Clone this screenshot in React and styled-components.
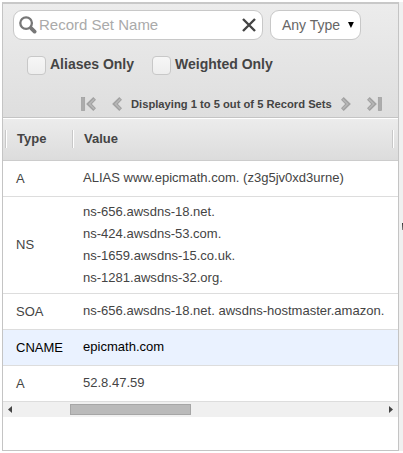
import React from "react";
import styled, { createGlobalStyle } from "styled-components";

const GlobalStyle = createGlobalStyle`
  * { box-sizing: border-box; }
  body {
    margin: 0;
    background: #fff;
    color: #444;
    font-family: "Liberation Sans", Arial, sans-serif;
    font-size: 13px;
    overflow: hidden;
  }
`;

const Page = styled.div`
  display: flex;
  width: 403px;
  height: 453px;
  padding: 2px 0 2px 2px;
`;

const Panel = styled.main`
  display: flex;
  flex-direction: column;
  width: 397px;
  height: 449px;
  border: 1px solid #c4c4c4;
  border-top: 2px solid #c8c8c8;
  background: #fff;
`;

const Gutter = styled.div`
  display: flex;
  justify-content: flex-end;
  width: 4px;
  padding-top: 221px;
  background: #f0f0f0;
`;

const Grip = styled.span`
  width: 1px;
  height: 7px;
  background: linear-gradient(#333, #888);
`;

const Toolbar = styled.header`
  height: 114px;
  border-bottom: 1px solid #c4c4c4;
  background: linear-gradient(#ececec, #dedede);
`;

const SearchRow = styled.div`
  display: flex;
  gap: 7px;
  padding: 6px 0 0 10px;
`;

const Field = styled.div`
  display: flex;
  align-items: center;
  width: ${(p) => p.$width}px;
  height: 30px;
  padding: 0 6px 0 ${(p) => p.$inset}px;
  border: 1px solid #c8c8c8;
  border-radius: 9px;
  background: #fff;
  color: ${(p) => p.$color};
  font-size: ${(p) => p.$size}px;
  white-space: nowrap;
`;

const Placeholder = styled.span`
  flex: 1;
  margin: 0 0 2px 2px;
`;

const Caret = styled.svg`
  margin: 0 0 1px 8px;
`;

const FilterRow = styled.div`
  display: flex;
  padding: 16px 0 0 24px;
`;

const Check = styled.div`
  display: flex;
  width: 125px;
  gap: 4px;
  font-size: 14px;
  font-weight: bold;
  line-height: 17px;
  white-space: nowrap;
`;

const Box = styled.span`
  flex: none;
  width: 19px;
  height: 19px;
  border: 1px solid #c8c8c8;
  border-radius: 4px;
  background: linear-gradient(#f6f6f6, #eee);
`;

const Pager = styled.nav`
  display: flex;
  align-items: center;
  height: 15px;
  margin: 21px 0 0 78px;
  font-size: 11.2px;
  font-weight: bold;
  white-space: nowrap;
`;

const PageText = styled.span`
  width: 202px;
  margin-left: 9px;
`;

const PageIcon = styled.svg`
  flex: none;
  margin-left: ${(p) => p.$gap || 0}px;
`;

const HeaderRow = styled.div`
  display: flex;
  height: 43px;
  padding: 11px 0 0 2px;
  border-top: 1px solid #fff;
  border-bottom: 1px solid #ccc;
  background: linear-gradient(#ececec, #dcdcdc);
  font-weight: bold;
`;

const HeaderCell = styled.div`
  width: ${(p) => p.$width}px;
  height: 18px;
  padding-left: 11px;
  border-left: 1px solid #c8c8c8;
  box-shadow: inset 1px 0 #fff;
  line-height: 18px;
`;

const HeaderEnd = styled.div`
  width: 2px;
  height: 18px;
  border-left: 1px solid #c8c8c8;
  background: #fff;
`;

const Row = styled.div`
  display: flex;
  height: ${(p) => p.$height}px;
  border-bottom: 1px solid #ddd;
  background: ${(p) => (p.$selected ? "#eaf2ff" : "#fff")};
  color: ${(p) => (p.$selected ? "#000" : "#444")};
`;

const TypeCell = styled.div`
  display: flex;
  align-items: center;
  width: 67px;
  padding: 0 0 1px 13px;
`;

const ValueCell = styled.div`
  padding: ${(p) => p.$top}px 0 0 13px;
  font-size: 13.04px;
  line-height: 22px;
  white-space: nowrap;
`;

const Scrollbar = styled.div`
  display: flex;
  align-items: center;
  height: 15px;
  padding: 0 5px;
  background: #f0f0f0;
`;

const Thumb = styled.div`
  width: 121px;
  height: 11px;
  margin: 0 auto 0 58px;
  border: 1px solid #a6a6a6;
  background: #bababa;
`;

const Chevron = ({ back, bar, gap }) => (
  <PageIcon $gap={gap} width={bar ? 15 : 10} height="14" viewBox={bar ? "0 0 15 14" : "0 0 10 14"}>
    <g transform={back ? `translate(${bar ? 15 : 10} 0) scale(-1 1)` : undefined}>
      <path d="M0 2.8L2.7 0L9.9 7L2.7 14L0 11.2L4.1 7Z" fill="#a2a2a2" />
      <path d="M1.8 2.2L6.7 7L1.8 11.8" fill="none" stroke="#b8b8b8" strokeWidth="1.3" />
      {bar && <rect x="11.3" y="0.4" width="3.3" height="13.2" fill="#acacac" stroke="#a0a0a0" strokeWidth=".7" />}
    </g>
  </PageIcon>
);

const records = [
  { type: "A", values: ["ALIAS www.epicmath.com. (z3g5jv0xd3urne)"], height: 36 },
  { type: "NS", values: ["ns-656.awsdns-18.net.", "ns-424.awsdns-53.com.", "ns-1659.awsdns-15.co.uk.", "ns-1281.awsdns-32.org."], height: 97, top: 4 },
  { type: "SOA", values: ["ns-656.awsdns-18.net. awsdns-hostmaster.amazon."], height: 36 },
  { type: "CNAME", values: ["epicmath.com"], height: 36, selected: true },
  { type: "A", values: ["52.8.47.59"], height: 36 },
];

export default function App() {
  return (
    <>
      <GlobalStyle />
      <Page>
        <Panel>
          <Toolbar>
            <SearchRow>
              <Field $width={250} $inset={5} $color="#aaa" $size={15}>
                <svg width="18" height="18" viewBox="0 0 18 18" fill="none" stroke="#777">
                  <circle cx="7.1" cy="7.1" r="5.8" strokeWidth="2.3" />
                  <path d="M11 11L12.5 12.5" strokeWidth="2.4" />
                  <path d="M12.3 12.3L15.6 15.6" strokeWidth="3.8" strokeLinecap="round" />
                </svg>
                <Placeholder>Record Set Name</Placeholder>
                <svg width="14" height="14" viewBox="0 0 14 14" stroke="#444" strokeWidth="2.4">
                  <path d="M1 1L13 13M13 1L1 13" />
                </svg>
              </Field>
              <Field $width={91} $inset={11} $color="#666" $size={14}>
                Any Type
                <Caret width="6" height="6" viewBox="0 0 6 6"><path d="M0 0H6L3 6Z" fill="#000" /></Caret>
              </Field>
            </SearchRow>
            <FilterRow>
              <Check><Box />Aliases Only</Check>
              <Check><Box />Weighted Only</Check>
            </FilterRow>
            <Pager>
              <Chevron back bar />
              <Chevron back gap={16} />
              <PageText>Displaying 1 to 5 out of 5 Record Sets</PageText>
              <Chevron gap={8} />
              <Chevron bar gap={16} />
            </Pager>
          </Toolbar>
          <HeaderRow>
            <HeaderCell $width={67}>Type</HeaderCell>
            <HeaderCell $width={320}>Value</HeaderCell>
            <HeaderEnd />
          </HeaderRow>
          {records.map((r, i) => (
            <Row key={i} $height={r.height} $selected={r.selected}>
              <TypeCell>{r.type}</TypeCell>
              <ValueCell $top={r.top || 6}>
                {r.values.map((v) => <div key={v}>{v}</div>)}
              </ValueCell>
            </Row>
          ))}
          <Scrollbar>
            <svg width="4" height="7" viewBox="0 0 4 7"><path d="M4 0V7L0 3.5Z" fill="#444" /></svg>
            <Thumb />
            <svg width="4" height="7" viewBox="0 0 4 7"><path d="M0 0V7L4 3.5Z" fill="#444" /></svg>
          </Scrollbar>
        </Panel>
        <Gutter><Grip /></Gutter>
      </Page>
    </>
  );
}
